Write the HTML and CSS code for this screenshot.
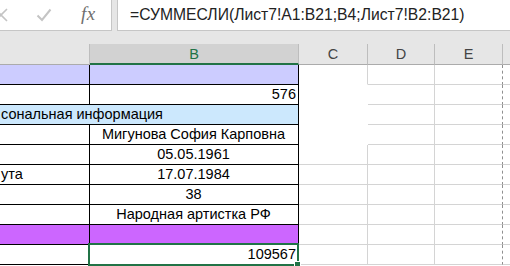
FILE: index.html
```html
<!DOCTYPE html>
<html lang="ru">
<head>
<meta charset="utf-8">
<link rel="stylesheet" href="styles.css">
</head>
<body>
<div class="app">
  <div class="fbar">
    <div class="tools">
      <svg class="ico-x" width="14" height="14" viewBox="0 0 14 14"><path d="M1 1 L13 13 M13 1 L1 13" stroke="#c4c4c4" stroke-width="1.6" fill="none"/></svg>
      <svg class="ico-ok" width="16" height="14" viewBox="0 0 16 14"><path d="M1.5 7.5 L6 12 L14.5 1.5" stroke="#c4c4c4" stroke-width="2" fill="none"/></svg>
      <span class="fx">fx</span>
    </div>
    <div class="formula">=СУММЕСЛИ(Лист7!A1:B21;B4;Лист7!B2:B21)</div>
  </div>
  <div class="sheet">
    <div class="row hdr">
      <div class="h ha"></div>
      <div class="h hb">B</div>
      <div class="h hc">C</div>
      <div class="h hd">D</div>
      <div class="h he">E</div>
      <div class="h hf"></div>
    </div>
    <div class="row">
      <div class="cell ca lilac"></div>
      <div class="cell cb lilac"></div>
      <div class="cell cc g nob"></div>
      <div class="cell cd g"></div>
      <div class="cell ce g"></div>
      <div class="cell cf g"></div>
    </div>
    <div class="row">
      <div class="cell ca"></div>
      <div class="cell cb right">576</div>
      <div class="cell cc g none"></div>
      <div class="cell cd g"></div>
      <div class="cell ce g"></div>
      <div class="cell cf g"></div>
    </div>
    <div class="row">
      <div class="cell cab blue">сональная информация</div>
      <div class="cell cc g none"></div>
      <div class="cell cd g"></div>
      <div class="cell ce g"></div>
      <div class="cell cf g"></div>
    </div>
    <div class="row">
      <div class="cell ca"></div>
      <div class="cell cb center">Мигунова София Карповна</div>
      <div class="cell cc g none"></div>
      <div class="cell cd g"></div>
      <div class="cell ce g"></div>
      <div class="cell cf g"></div>
    </div>
    <div class="row">
      <div class="cell ca"></div>
      <div class="cell cb center">05.05.1961</div>
      <div class="cell cc g"></div>
      <div class="cell cd g"></div>
      <div class="cell ce g"></div>
      <div class="cell cf g"></div>
    </div>
    <div class="row">
      <div class="cell ca">ута</div>
      <div class="cell cb center">17.07.1984</div>
      <div class="cell cc g"></div>
      <div class="cell cd g"></div>
      <div class="cell ce g"></div>
      <div class="cell cf g"></div>
    </div>
    <div class="row">
      <div class="cell ca"></div>
      <div class="cell cb center">38</div>
      <div class="cell cc g"></div>
      <div class="cell cd g"></div>
      <div class="cell ce g"></div>
      <div class="cell cf g"></div>
    </div>
    <div class="row">
      <div class="cell ca"></div>
      <div class="cell cb center">Народная артистка РФ</div>
      <div class="cell cc g"></div>
      <div class="cell cd g"></div>
      <div class="cell ce g"></div>
      <div class="cell cf g"></div>
    </div>
    <div class="row">
      <div class="cell ca purple"></div>
      <div class="cell cb purple"></div>
      <div class="cell cc g"></div>
      <div class="cell cd g"></div>
      <div class="cell ce g"></div>
      <div class="cell cf g"></div>
    </div>
    <div class="row">
      <div class="cell ca"></div>
      <div class="cell cb right active">109567<span class="handle"></span></div>
      <div class="cell cc g"></div>
      <div class="cell cd g"></div>
      <div class="cell ce g"></div>
      <div class="cell cf g"></div>
    </div>
  </div>
</div>
</body>
</html>
```
FILE: styles.css
```css
html, body {
  margin: 0;
  padding: 0;
  background: #ffffff;
}
.app {
  width: 510px;
  height: 266px;
  overflow: hidden;
  font-family: "Liberation Sans", Arial, sans-serif;
}
.fbar {
  display: flex;
  align-items: flex-start;
  height: 44px;
  background: #e6e6e6;
}
.tools {
  position: relative;
  box-sizing: border-box;
  width: 112px;
  height: 31px;
  background: #ffffff;
  border-right: 1px solid #c6c6c6;
  border-bottom: 1px solid #c6c6c6;
  display: flex;
  align-items: center;
}
.ico-x {
  margin-left: -6px;
}
.ico-ok {
  margin-left: 28px;
}
.fx {
  margin-left: 29px;
  font-family: "Liberation Serif", "Times New Roman", serif;
  font-style: italic;
  font-size: 19px;
  color: #6f6f6f;
  letter-spacing: 0.5px;
  margin-top: -2px;
}
.formula {
  box-sizing: border-box;
  flex: 1;
  margin-left: 5px;
  height: 31px;
  background: #ffffff;
  border-left: 1px solid #c6c6c6;
  border-bottom: 1px solid #c6c6c6;
  padding-left: 12px;
  font-size: 15.7px;
  line-height: 30px;
  color: #222222;
  white-space: nowrap;
}
.sheet {
  display: flex;
  flex-direction: column;
}
.row {
  display: flex;
  height: 20px;
}
.hdr {
  height: 21px;
  background: #e6e6e6;
}
.h {
  box-sizing: border-box;
  height: 21px;
  border-bottom: 1px solid #ababab;
  border-right: 1px solid #bdbdbd;
  text-align: center;
  font-size: 14.5px;
  line-height: 20px;
  color: #444444;
}
.ha { width: 90px; }
.hb {
  width: 209px;
  background: #d2d2d2;
  color: #217346;
  border-bottom: 2px solid #217346;
}
.hc { width: 69px; }
.hd { width: 67px; }
.he { width: 68px; }
.hf { flex: 1; border-right: none; }

.cell {
  position: relative;
  box-sizing: border-box;
  height: 20px;
  border-bottom: 1px solid #000000;
  border-right: 1px solid #000000;
  font-size: 14.5px;
  line-height: 19px;
  color: #000000;
  white-space: nowrap;
  overflow: hidden;
  padding: 0 2px 0 1px;
}
.ca { width: 90px; }
.cb { width: 209px; }
.cab { width: 299px; }
.cc { width: 69px; }
.cd { width: 67px; }
.ce { width: 68px; border-right: 1px dashed #8f8f8f !important; }
.cf { flex: 1; border-right: none !important; }
.g {
  border-bottom-color: #d4d4d4;
  border-right-color: #d4d4d4;
}
.nob { border-bottom-color: transparent; }
.none { border-color: transparent; }
.right { text-align: right; }
.center { text-align: center; }
.lilac { background: #ccccff; }
.blue { background: #cce8fd; }
.purple { background: #cc66ff; }
.active {
  overflow: visible;
}
.active::after {
  content: "";
  position: absolute;
  left: -2px;
  top: -2px;
  right: -1px;
  bottom: -2px;
  border: 2px solid #217346;
  pointer-events: none;
}
.handle {
  position: absolute;
  right: -3px;
  bottom: -4px;
  width: 5px;
  height: 5px;
  background: #217346;
  border: 1px solid #ffffff;
  z-index: 2;
}
```
